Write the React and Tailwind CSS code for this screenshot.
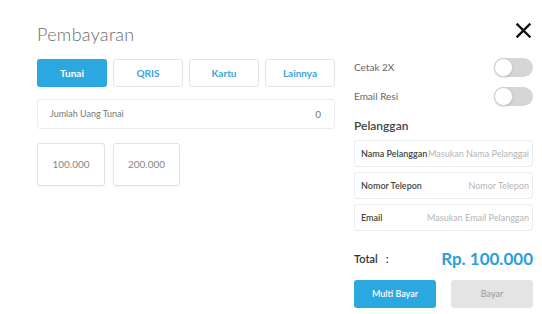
import React from "react";

function Toggle() {
  return (
    <div className="relative h-[19px] w-[39px] rounded-full bg-[#d6d6d6]">
      <div className="absolute left-0 top-0 h-[19px] w-[19px] rounded-full border border-[#d0d0d0] bg-white shadow-sm" />
    </div>
  );
}

function Field({ label, placeholder }) {
  return (
    <div className="flex h-[27px] items-center justify-between rounded-[3px] border border-[#ececec] bg-white pl-[6px] pr-[3px] text-[9px]">
      <span className="whitespace-nowrap font-semibold text-[#444]">{label}</span>
      <span className="whitespace-nowrap overflow-hidden text-[#b5b5b5]">{placeholder}</span>
    </div>
  );
}

export default function App() {
  return (
    <div
      className="flex h-[314px] w-[542px] bg-white pl-[37px] pr-[9px] text-[#555]"
      style={{ fontFamily: "Lato, 'Noto Sans', sans-serif" }}
    >
      <div className="flex w-[298px] flex-col">
        <div className="mt-[22px] h-[24px] text-[18px] font-light leading-[24px] tracking-[0.3px] text-[#6b6b6b]">Pembayaran</div>
        <div className="mt-[13px] grid grid-cols-4 gap-[6px]">
          <div className="flex h-[28px] items-center justify-center rounded-[3px] bg-[#2ba8e0] text-[10px] font-bold text-white">Tunai</div>
          <div className="flex h-[28px] items-center justify-center rounded-[3px] border border-[#e4e4e4] text-[10px] font-bold text-[#3aa6d9]">QRIS</div>
          <div className="flex h-[28px] items-center justify-center rounded-[3px] border border-[#e4e4e4] text-[10px] font-bold text-[#3aa6d9]">Kartu</div>
          <div className="flex h-[28px] items-center justify-center rounded-[3px] border border-[#e4e4e4] text-[10px] font-bold text-[#3aa6d9]">Lainnya</div>
        </div>
        <div className="mt-[12px] flex h-[30px] items-center justify-between rounded-[3px] border border-[#ececec] pl-[12px] pr-[13px] text-[9px] text-[#777]">
          <span>Jumlah Uang Tunai</span>
          <span className="text-[10px]">0</span>
        </div>
        <div className="mt-[14px] flex gap-[8px]">
          <div className="flex h-[43px] w-[68px] items-center justify-center rounded-[3px] border border-[#e2e2e2] text-[10px] text-[#888] shadow-[0_1px_2px_rgba(0,0,0,0.06)]">100.000</div>
          <div className="flex h-[43px] w-[67px] items-center justify-center rounded-[3px] border border-[#e2e2e2] text-[10px] text-[#888] shadow-[0_1px_2px_rgba(0,0,0,0.06)]">200.000</div>
        </div>
      </div>
      <div className="ml-[19px] flex w-[179px] flex-col">
        <div className="mt-[23px] flex h-[16px] justify-end pr-[2px]">
          <svg width="15" height="15" viewBox="0 0 15 15">
            <path d="M1.5 1.5 L13.5 13.5 M13.5 1.5 L1.5 13.5" stroke="#111" strokeWidth="2.4" strokeLinecap="square" />
          </svg>
        </div>
        <div className="mt-[19px] flex items-center justify-between">
          <span className="text-[10px] text-[#666]">Cetak 2X</span>
          <Toggle />
        </div>
        <div className="mt-[10px] flex items-center justify-between">
          <span className="text-[10px] text-[#666]">Email Resi</span>
          <Toggle />
        </div>
        <div className="mt-[11px] text-[12px] font-semibold text-[#444]">Pelanggan</div>
        <div className="mt-[5px] flex flex-col gap-[5px]">
          <Field label="Nama Pelanggan" placeholder="Masukan Nama Pelanggai" />
          <Field label="Nomor Telepon" placeholder="Nomor Telepon" />
          <Field label="Email" placeholder="Masukan Email Pelanggan" />
        </div>
        <div className="mt-[15px] flex items-center justify-between">
          <span className="text-[11px] font-semibold text-[#333]">Total&nbsp;&nbsp;&nbsp;:</span>
          <span className="text-[17px] font-bold text-[#2b9fd6]">Rp. 100.000</span>
        </div>
        <div className="mt-[8px] flex justify-between">
          <div className="flex h-[28px] w-[82px] items-center justify-center rounded-[3px] bg-[#2ba8e0] text-[9px] font-semibold text-white">Multi Bayar</div>
          <div className="flex h-[28px] w-[82px] items-center justify-center rounded-[3px] bg-[#e4e4e4] text-[9px] text-[#999]">Bayar</div>
        </div>
      </div>
    </div>
  );
}
